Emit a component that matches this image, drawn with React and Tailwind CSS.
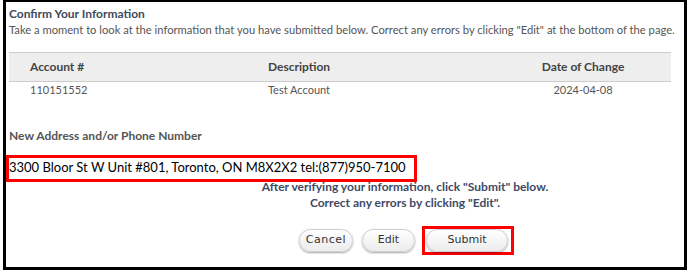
export default function App() {
  const rows = [{ account: "110151552", description: "Test Account", date: "2024-04-08" }];

  return (
    <div className="w-[688px] h-[273px] bg-white pl-[3px] font-['Lato',sans-serif]">
      <div className="w-[684px] h-[270px] border-[3px] border-t-2 border-black flex flex-col">
        {/* heading */}
        <div className="pl-[3px] pt-[4px]">
          <h1 className="text-[12px] font-bold text-[#3d4a5c] leading-[15px]">Confirm Your Information</h1>
          <p className="text-[11.2px] text-[#555] leading-[15px] mt-[1px]">
            Take a moment to look at the information that you have submitted below. Correct any errors by clicking "Edit" at the bottom of the page.
          </p>
        </div>

        {/* table */}
        <table className="ml-[3px] mt-[15px] w-[662px] text-[11px] text-[#555] border-collapse table-fixed">
          <thead>
            <tr className="bg-[#eeeeee] border-y border-[#cccccc] h-[29px] text-[12px]">
              <th className="w-[141px] text-left pl-[21px] font-bold text-[#444]">Account #</th>
              <th className="w-[298px] text-center font-bold text-[#444]">Description</th>
              <th className="text-center pl-[47px] font-bold text-[#444]">Date of Change</th>
            </tr>
          </thead>
          <tbody>
            {rows.map((r) => (
              <tr key={r.account} className="h-[15px]">
                <td className="pl-[21px]">{r.account}</td>
                <td className="text-center">{r.description}</td>
                <td className="text-center pl-[47px]">{r.date}</td>
              </tr>
            ))}
          </tbody>
        </table>

        <div className="pl-[3px] mt-[29px] text-[12px] font-bold text-[#555] leading-[15px]">
          New Address and/or Phone Number
        </div>

        {/* highlighted address */}
        <div className="mt-[12px] w-[411px] h-[27px] border-[3px] border-[#ff0000] flex items-center text-[13px] text-black">
          3300 Bloor St W Unit #801, Toronto, ON M8X2X2 tel:(877)950-7100
        </div>

        <div className="ml-[205px] -mt-[3px] w-[388px] text-center text-[12px] font-bold text-[#3e4a66] leading-[16px]">
          <p>After verifying your information, click "Submit" below.</p>
          <p>Correct any errors by clicking "Edit".</p>
        </div>

        {/* buttons */}
        <div className="flex items-center ml-[293px] mt-[15px]">
          <button className="w-[54px] h-[23px] rounded-full border border-[#cfcfcf] bg-gradient-to-b from-white to-[#ececec] shadow-[0_1px_2px_rgba(0,0,0,0.35)] text-[11px] tracking-[0.5px] text-[#333] font-['DejaVu_Sans',sans-serif]">
            Cancel
          </button>
          <button className="ml-[9px] w-[53px] h-[23px] rounded-full border border-[#cfcfcf] bg-gradient-to-b from-white to-[#ececec] shadow-[0_1px_2px_rgba(0,0,0,0.35)] text-[11px] text-[#333] font-['DejaVu_Sans',sans-serif]">
            Edit
          </button>
          <div className="ml-[7px] border-[3px] border-[#ff0000] pl-[1px] pr-[3px]">
            <button className="block w-[82px] h-[23px] rounded-full border border-[#cfcfcf] bg-gradient-to-b from-white to-[#ececec] shadow-[0_1px_2px_rgba(0,0,0,0.35)] text-[11px] text-[#333] font-['DejaVu_Sans',sans-serif]">
              Submit
            </button>
          </div>
        </div>
      </div>
    </div>
  );
}
